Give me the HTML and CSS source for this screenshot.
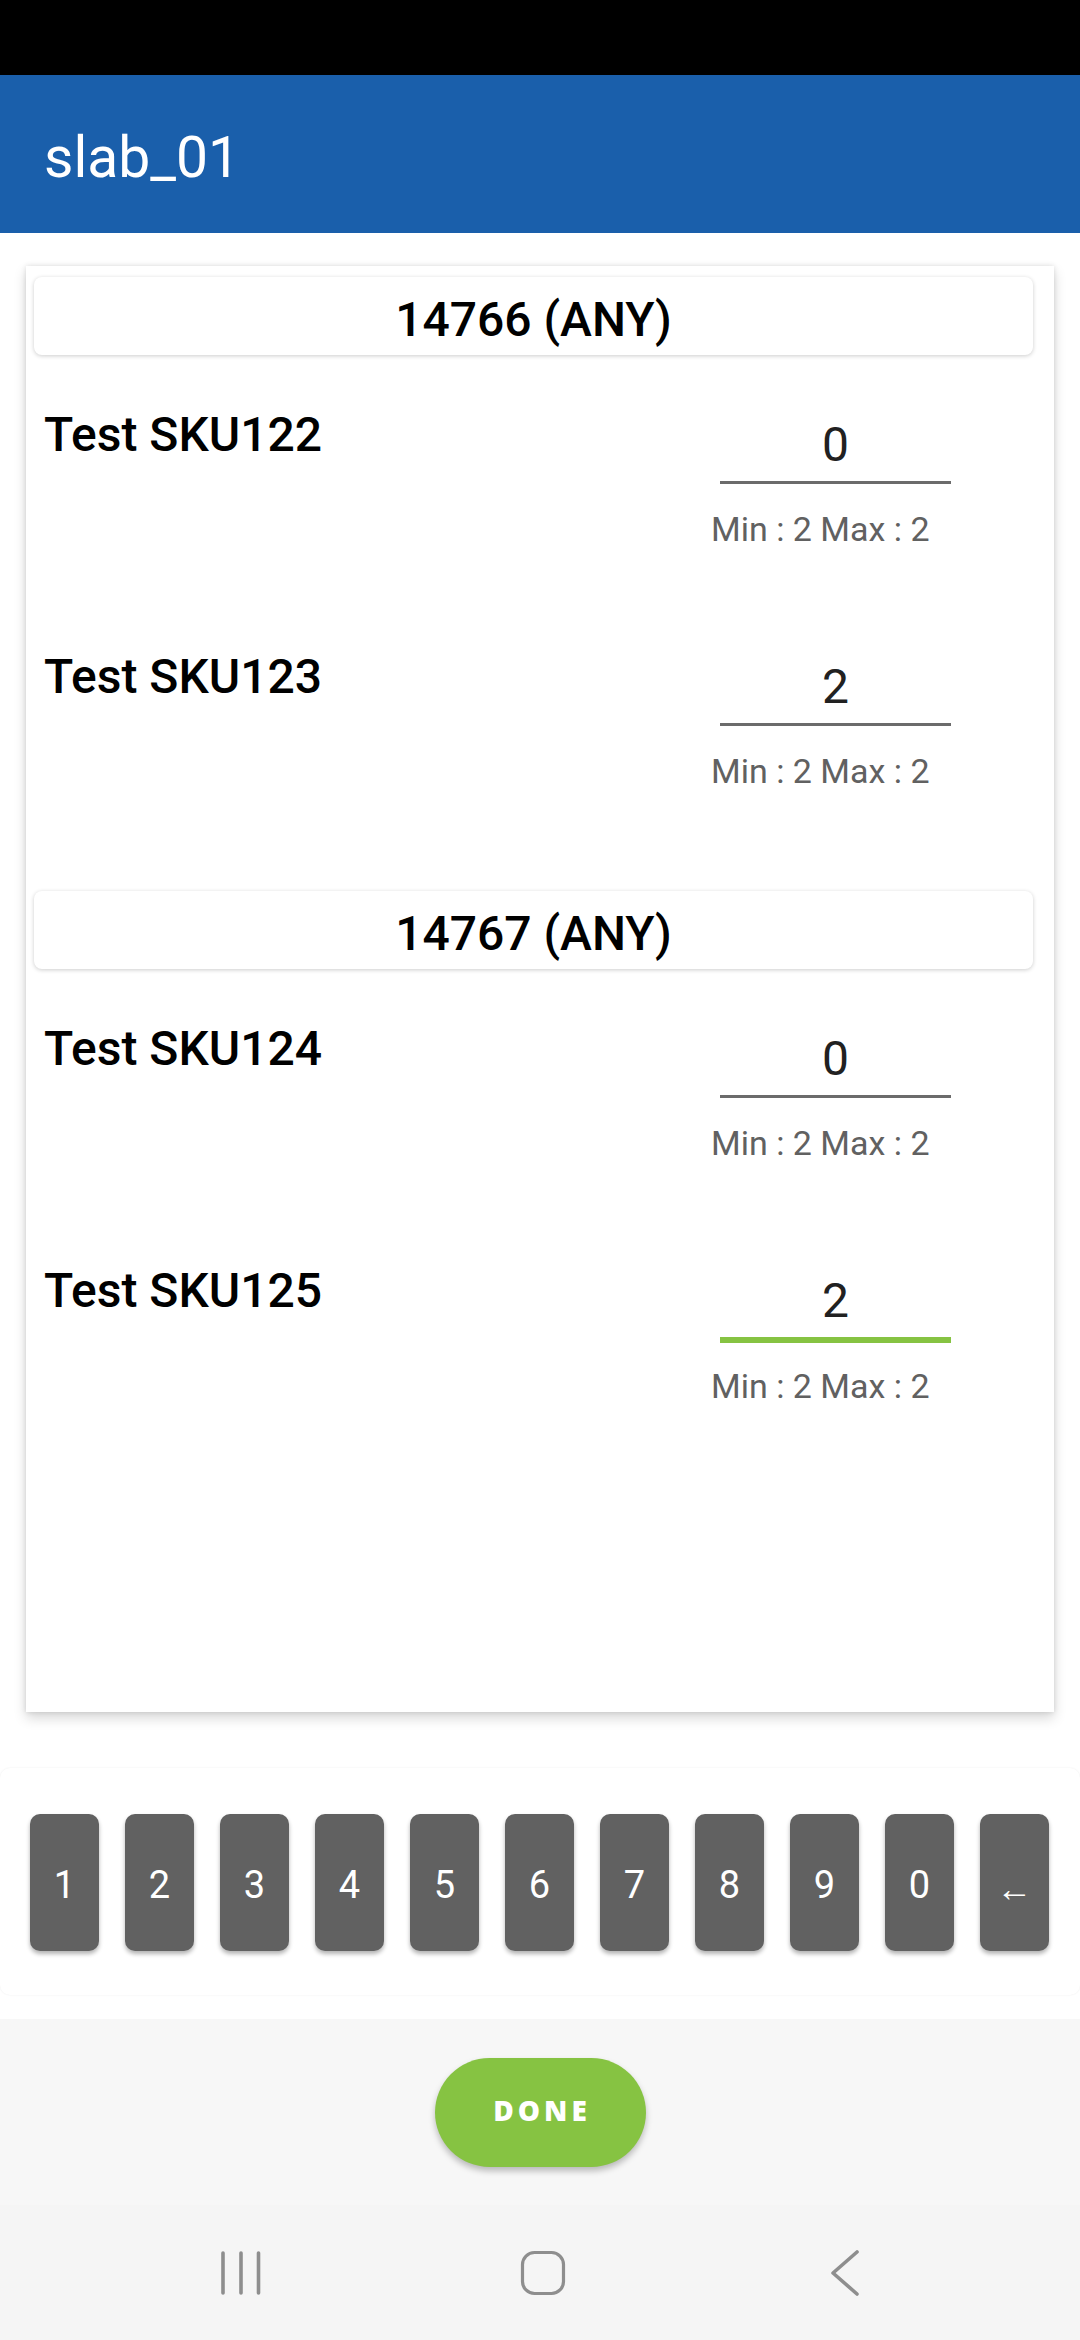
FILE: index.html
```html
<!DOCTYPE html>
<html>
<head>
<meta charset="utf-8">
<link rel="stylesheet" href="styles.css">
</head>
<body>
<div class="status"></div>
<header class="appbar"><h1 class="title">slab_01</h1></header>
<main class="content">
  <section class="card">
    <div class="group">
      <div class="group-head">14766 (ANY)</div>
      <div class="row">
        <div class="sku">Test SKU122</div>
        <div class="qty-col">
          <div class="qty">0</div>
          <div class="hint">Min : 2 Max : 2</div>
        </div>
      </div>
      <div class="row">
        <div class="sku">Test SKU123</div>
        <div class="qty-col">
          <div class="qty">2</div>
          <div class="hint">Min : 2 Max : 2</div>
        </div>
      </div>
    </div>
    <div class="group">
      <div class="group-head">14767 (ANY)</div>
      <div class="row">
        <div class="sku">Test SKU124</div>
        <div class="qty-col">
          <div class="qty">0</div>
          <div class="hint">Min : 2 Max : 2</div>
        </div>
      </div>
      <div class="row">
        <div class="sku">Test SKU125</div>
        <div class="qty-col">
          <div class="qty focused">2</div>
          <div class="hint">Min : 2 Max : 2</div>
        </div>
      </div>
    </div>
  </section>
</main>
<section class="keypad">
  <div class="key">1</div>
  <div class="key">2</div>
  <div class="key">3</div>
  <div class="key">4</div>
  <div class="key">5</div>
  <div class="key">6</div>
  <div class="key">7</div>
  <div class="key">8</div>
  <div class="key">9</div>
  <div class="key">0</div>
  <div class="key arrow">←</div>
</section>
<footer class="footer">
  <button class="done">DONE</button>
</footer>
<nav class="nav">
  <svg class="nav-icon" width="40" height="46" viewBox="0 0 40 46">
    <g stroke="#8e8e8e" stroke-width="3.6" stroke-linecap="round">
      <line x1="2" y1="3" x2="2" y2="43"/>
      <line x1="20" y1="3" x2="20" y2="43"/>
      <line x1="37.5" y1="3" x2="37.5" y2="43"/>
    </g>
  </svg>
  <svg class="nav-icon" width="46" height="46" viewBox="0 0 46 46">
    <rect x="2.5" y="2.5" width="41" height="41" rx="12" fill="none" stroke="#8e8e8e" stroke-width="3.2"/>
  </svg>
  <svg class="nav-icon" width="30" height="46" viewBox="0 0 30 46">
    <polyline points="27,2 3,23 27,44" fill="none" stroke="#8e8e8e" stroke-width="3.6" stroke-linecap="round" stroke-linejoin="round"/>
  </svg>
</nav>
</body>
</html>
```
FILE: styles.css
```css
* { box-sizing: border-box; }
html, body { margin: 0; padding: 0; }
body {
  width: 1080px;
  height: 2340px;
  overflow: hidden;
  font-family: Roboto, "Noto Sans", sans-serif;
  background: #ffffff;
  display: flex;
  flex-direction: column;
}
.status { height: 75px; background: #000; flex: none; }
.appbar {
  height: 158px;
  flex: none;
  background: #1a5fab;
  display: flex;
  align-items: center;
  padding: 8px 0 0 44px;
}
.title {
  margin: 0;
  font-size: 57px;
  font-weight: 400;
  line-height: 56px;
  color: #fff;
}
.content { padding: 33px 26px 0; flex: none; }
.card {
  height: 1446px;
  padding: 11px 21px 0 8px;
  background: #fff;
  box-shadow: 0 6px 12px rgba(0,0,0,0.16), 0 0 5px rgba(0,0,0,0.12);
}
.group + .group { margin-top: 52px; }
.group-head {
  height: 78px;
  padding-top: 6px;
  border-radius: 8px;
  background: #fff;
  box-shadow: 0 1px 4px rgba(0,0,0,0.2);
  display: flex;
  align-items: center;
  justify-content: center;
  font-size: 48px;
  font-weight: 500;
  color: #000;
}
.row {
  height: 242px;
  display: flex;
  padding-left: 10px;
}
.sku {
  flex: 1;
  padding-top: 52px;
  font-size: 48px;
  font-weight: 500;
  line-height: 56px;
  color: #000;
}
.qty-col { width: 322px; }
.qty {
  margin: 62px 0 0 9px;
  width: 231px;
  height: 67px;
  line-height: 56px;
  font-size: 48px;
  text-align: center;
  color: #212121;
  border-bottom: 3px solid #6b6b6b;
}
.qty.focused { height: 70px; border-bottom: 6px solid #86c342; }
.hint {
  margin-top: 25px;
  font-size: 34px;
  line-height: 40px;
  color: #616161;
}
.qty.focused + .hint { margin-top: 23px; }
.keypad {
  flex: none;
  margin-top: 56px;
  height: 227px;
  padding: 46px 30px 0;
  border-radius: 10px;
  background: #fff;
  box-shadow: 0 0 2px rgba(0,0,0,0.08);
  display: flex;
  gap: 26px;
  align-items: flex-start;
}
.key {
  width: 69px;
  height: 137px;
  padding-top: 5px;
  border-radius: 10px;
  background: #616161;
  color: #fff;
  font-size: 38px;
  display: flex;
  align-items: center;
  justify-content: center;
  box-shadow: 0 3px 4px rgba(0,0,0,0.3);
}
.key.arrow { padding-top: 12px; font-size: 36px; }
.footer {
  flex: none;
  margin-top: 24px;
  height: 186px;
  background: #f7f7f7;
  display: flex;
  align-items: center;
  justify-content: center;
}
.done {
  width: 211px;
  height: 109px;
  border: none;
  border-radius: 55px;
  background: #86c342;
  color: #fff;
  font-family: "Open Sans", "DejaVu Sans", sans-serif;
  font-weight: 800;
  font-size: 28px;
  letter-spacing: 4px;
  padding: 0 0 4px 4px;
  box-shadow: 0 4px 6px rgba(0,0,0,0.25);
}
.nav {
  flex: none;
  height: 135px;
  background: #f5f5f5;
  display: grid;
  grid-template-columns: repeat(3, 302px);
  padding-left: 90px;
  align-items: center;
  justify-items: center;
}
.nav-icon { display: block; }
```
